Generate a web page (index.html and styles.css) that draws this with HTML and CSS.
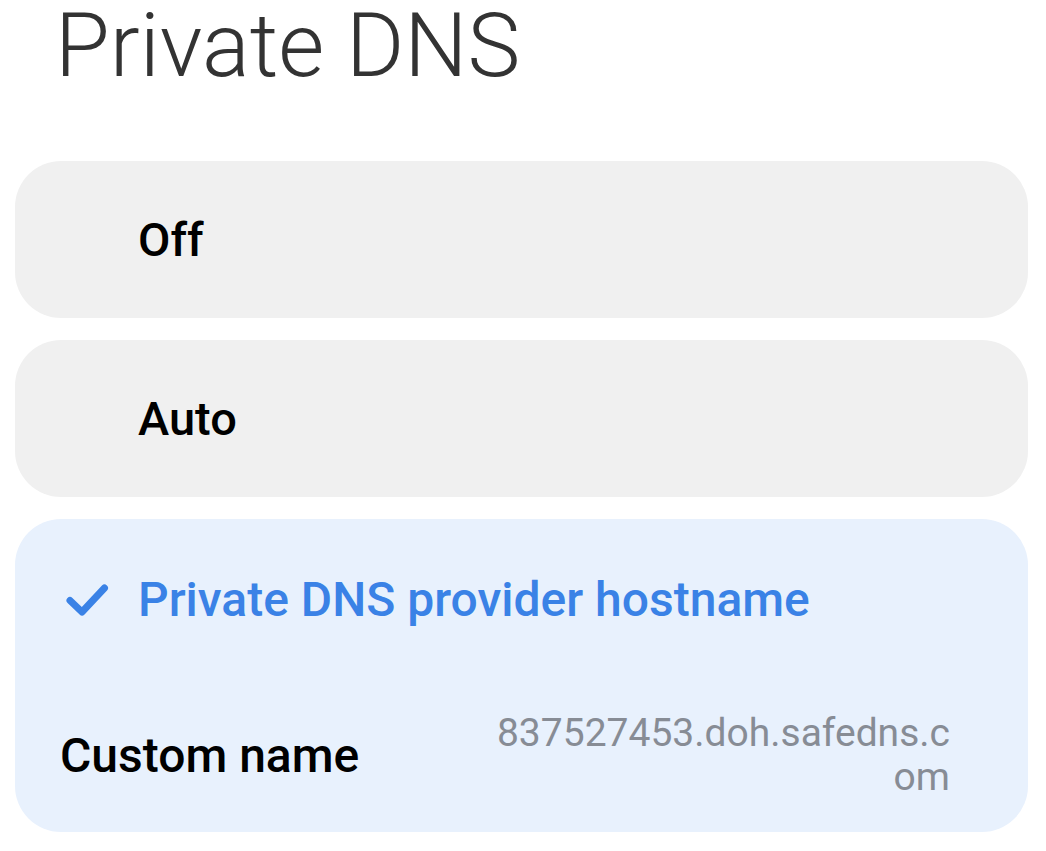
FILE: index.html
```html
<!DOCTYPE html>
<html lang="en">
<head>
<meta charset="utf-8">
<title>Private DNS</title>
<link rel="stylesheet" href="styles.css">
</head>
<body>
<h1 class="title">Private DNS</h1>
<div class="options">
  <div class="card">
    <span class="label">Off</span>
  </div>
  <div class="card">
    <span class="label">Auto</span>
  </div>
  <div class="card selected">
    <div class="sel-row">
      <span class="check">
        <svg width="44" height="36" viewBox="0 0 44 36" aria-hidden="true">
          <polyline points="5,18.5 17,30 39.5,6" fill="none" stroke="#3a82e6" stroke-width="7" stroke-linecap="round" stroke-linejoin="round"/>
        </svg>
      </span>
      <span class="label blue">Private DNS provider hostname</span>
    </div>
    <div class="custom-row">
      <span class="custom-label">Custom name</span>
      <span class="custom-value">837527453.doh.safedns.c<br>om</span>
    </div>
  </div>
</div>
</body>
</html>
```
FILE: styles.css
```css
html, body {
  margin: 0;
  padding: 0;
  background: #ffffff;
}
body {
  font-family: Roboto, "Liberation Sans", sans-serif;
}
.title {
  margin: 1px 0 0 0;
  padding-left: 55px;
  font-family: Roboto, sans-serif;
  font-weight: 300;
  font-size: 89px;
  line-height: 90px;
  color: #333333;
}
.options {
  margin-top: 70px;
  padding: 0 18px 0 15px;
  display: flex;
  flex-direction: column;
  gap: 22px;
}
.card {
  background: #f0f0f0;
  border-radius: 46px;
  height: 157px;
  display: flex;
  align-items: center;
  padding-left: 123px;
  box-sizing: border-box;
}
.label {
  font-family: Roboto, sans-serif;
  font-weight: 500;
  font-size: 47px;
  color: #000000;
}
.card.selected {
  background: #e8f1fd;
  height: 313px;
  padding: 0;
  display: flex;
  flex-direction: column;
  align-items: stretch;
}
.sel-row {
  height: 160px;
  display: flex;
  align-items: center;
  padding-left: 50px;
}
.check {
  width: 73px;
  display: flex;
  align-items: center;
  margin-top: 2px;
}
.check svg {
  display: block;
}
.blue {
  color: #3a82e6;
  font-size: 48px;
}
.custom-row {
  flex: 1;
  display: flex;
  align-items: center;
  justify-content: space-between;
  padding: 0 78px 0 45px;
}
.custom-label {
  font-family: Roboto, sans-serif;
  font-weight: 500;
  font-size: 48px;
  color: #000000;
}
.custom-value {
  font-family: Roboto, sans-serif;
  font-weight: 400;
  font-size: 39px;
  line-height: 44px;
  color: #878c95;
  text-align: right;
  margin-top: -2px;
}
```
